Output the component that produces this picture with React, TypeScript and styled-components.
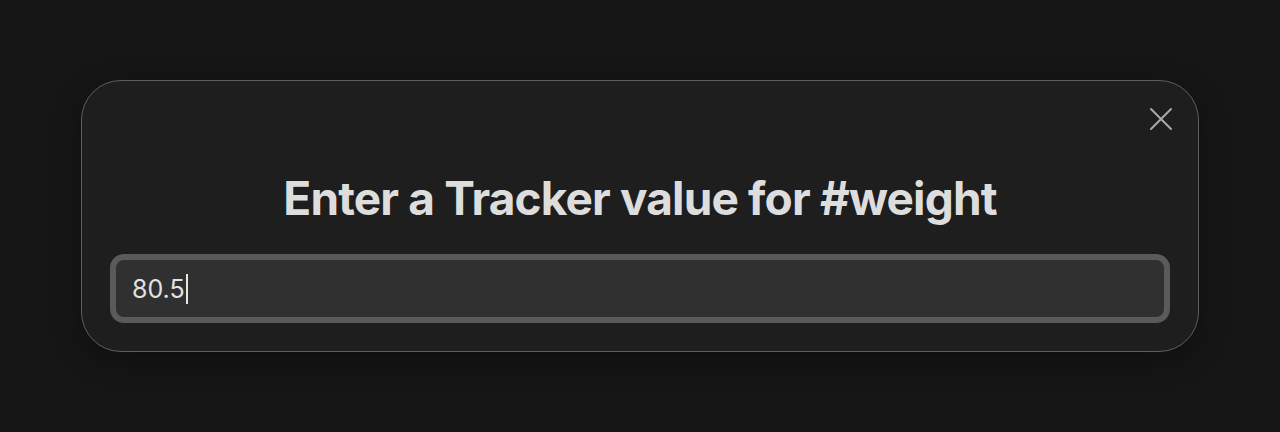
import styled, { createGlobalStyle } from 'styled-components'

const GlobalStyle = createGlobalStyle`
  html, body {
    margin: 0;
    padding: 0;
    background: #161616;
    font-family: Inter, "Noto Sans", sans-serif;
  }
`

const CloseIcon = () => (
  <svg width="24" height="24" viewBox="0 0 24 24" fill="none" stroke="currentColor" strokeWidth="2" strokeLinecap="round">
    <path d="M2 2L22 22M22 2L2 22" />
  </svg>
)

const App = () => {
  return (
    <>
      <GlobalStyle />
      <StyledPage>
        <StyledModal>
          <CloseButton aria-label="Close">
            <CloseIcon />
          </CloseButton>
          <StyledTitle>Enter a Tracker value for #weight</StyledTitle>
          <StyledField>
            <span>80.5</span>
            <Caret />
          </StyledField>
        </StyledModal>
      </StyledPage>
    </>
  )
}

const StyledPage = styled.div`
  width: 1280px;
  height: 432px;
  box-sizing: border-box;
  padding: 80px 81px 0;
`

const StyledModal = styled.div`
  position: relative;
  box-sizing: border-box;
  height: 272px;
  border: 1.5px solid #5e5e5e;
  border-radius: 40px;
  background: #1e1e1e;
  box-shadow: 0 8px 30px rgba(0, 0, 0, 0.35);
  padding: 0 28px 28px;
  display: flex;
  flex-direction: column;
  justify-content: flex-end;
  gap: 28px;
`

const CloseButton = styled.button`
  position: absolute;
  top: 23px;
  right: 22px;
  width: 30px;
  height: 30px;
  padding: 0;
  border: none;
  background: none;
  color: #a9a9a9;
  display: flex;
  align-items: center;
  justify-content: center;
`

const StyledTitle = styled.h1`
  margin: 0;
  text-align: center;
  font-size: 46px;
  font-weight: 700;
  letter-spacing: -0.85px;
  line-height: 56px;
  color: #dddddd;
`

const StyledField = styled.div`
  box-sizing: border-box;
  height: 69px;
  border: 6px solid #5a5a5a;
  border-radius: 14px;
  background: #303030;
  padding: 0 16px;
  display: flex;
  align-items: center;
  font-size: 25px;
  color: #e2e2e2;
`

const Caret = styled.span`
  width: 2px;
  height: 30px;
  margin-left: 1px;
  background: #e6e6e6;
`

export default App
